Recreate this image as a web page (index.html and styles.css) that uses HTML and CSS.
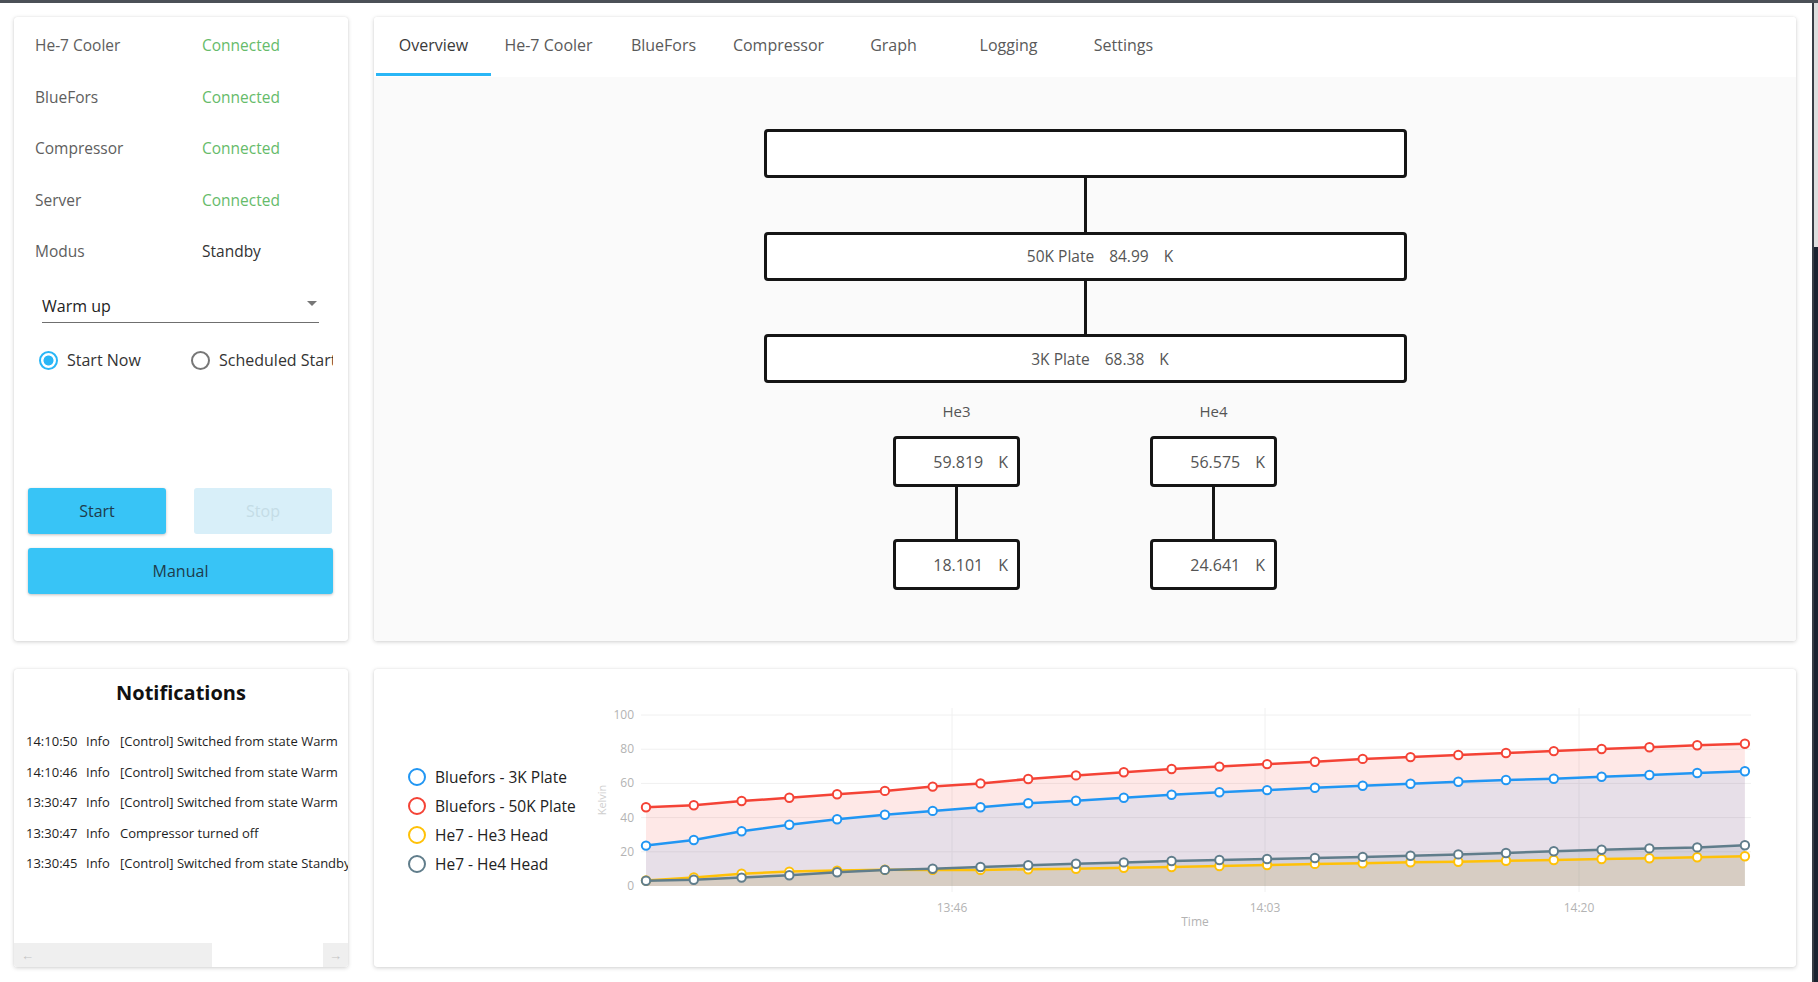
FILE: index.html
```html
<!DOCTYPE html>
<html lang="en">
<head>
<meta charset="utf-8">
<title>Cryostat Control</title>
<link rel="stylesheet" href="styles.css">
</head>
<body>
<div class="window">
  <div class="app">
    <section class="card status-card">
      <div class="status-list">
        <div class="status-row"><span class="label">He-7 Cooler</span><span class="value ok">Connected</span></div>
        <div class="status-row"><span class="label">BlueFors</span><span class="value ok">Connected</span></div>
        <div class="status-row"><span class="label">Compressor</span><span class="value ok">Connected</span></div>
        <div class="status-row"><span class="label">Server</span><span class="value ok">Connected</span></div>
        <div class="status-row"><span class="label">Modus</span><span class="value">Standby</span></div>
      </div>
      <div class="select"><span>Warm up</span><span class="caret"></span></div>
      <div class="radios">
        <div class="radio first"><span class="dot checked"></span><span>Start Now</span></div>
        <div class="radio"><span class="dot"></span><span class="clip">Scheduled Start</span></div>
      </div>
      <div class="actions">
        <button class="btn">Start</button>
        <button class="btn disabled">Stop</button>
        <button class="btn wide">Manual</button>
      </div>
    </section>

    <section class="card main-card">
      <nav class="tabs">
        <span class="tab active">Overview</span>
        <span class="tab">He-7 Cooler</span>
        <span class="tab">BlueFors</span>
        <span class="tab">Compressor</span>
        <span class="tab">Graph</span>
        <span class="tab">Logging</span>
        <span class="tab">Settings</span>
      </nav>
      <div class="overview">
        <div class="node wide first-node"></div>
        <div class="link"></div>
        <div class="node wide"><span class="plate"><span>50K Plate</span><span>84.99</span><span>K</span></span></div>
        <div class="link"></div>
        <div class="node wide"><span class="plate"><span>3K Plate</span><span>68.38</span><span>K</span></span></div>
        <div class="he-row">
          <div class="he-col">
            <div class="he-label">He3</div>
            <div class="node small"><span>59.819</span><span>K</span></div>
            <div class="link short"></div>
            <div class="node small"><span>18.101</span><span>K</span></div>
          </div>
          <div class="he-col">
            <div class="he-label">He4</div>
            <div class="node small"><span>56.575</span><span>K</span></div>
            <div class="link short"></div>
            <div class="node small"><span>24.641</span><span>K</span></div>
          </div>
        </div>
      </div>
    </section>

    <section class="card notif-card">
      <h2 class="notif-title">Notifications</h2>
      <div class="notif-list">
        <div class="notif-row"><span class="time">14:10:50</span><span class="lvl">Info</span><span class="msg">[Control] Switched from state Warm</span></div>
        <div class="notif-row"><span class="time">14:10:46</span><span class="lvl">Info</span><span class="msg">[Control] Switched from state Warm</span></div>
        <div class="notif-row"><span class="time">13:30:47</span><span class="lvl">Info</span><span class="msg">[Control] Switched from state Warm</span></div>
        <div class="notif-row"><span class="time">13:30:47</span><span class="lvl">Info</span><span class="msg">Compressor turned off</span></div>
        <div class="notif-row"><span class="time">13:30:45</span><span class="lvl">Info</span><span class="msg">[Control] Switched from state Standby</span></div>
      </div>
      <div class="hscroll">
        <span class="sb-thumb">&#8592;</span>
        <span class="sb-btn">&#8594;</span>
      </div>
    </section>

    <section class="card chart-card">
      <div class="legend">
        <div class="legend-item"><span class="swatch blue"></span>Bluefors - 3K Plate</div>
        <div class="legend-item"><span class="swatch red"></span>Bluefors - 50K Plate</div>
        <div class="legend-item"><span class="swatch yellow"></span>He7 - He3 Head</div>
        <div class="legend-item"><span class="swatch gray"></span>He7 - He4 Head</div>
      </div>
      <svg class="chart" id="chart" width="1190" height="235" viewBox="0 0 1190 235">
        <g class="grid">
          <line x1="61" y1="15" x2="1171" y2="15"/>
          <line x1="61" y1="49.2" x2="1171" y2="49.2"/>
          <line x1="61" y1="83.4" x2="1171" y2="83.4"/>
          <line x1="61" y1="117.6" x2="1171" y2="117.6"/>
          <line x1="61" y1="151.8" x2="1171" y2="151.8"/>
          <line x1="372" y1="8" x2="372" y2="192"/>
          <line x1="685" y1="8" x2="685" y2="192"/>
          <line x1="999" y1="8" x2="999" y2="192"/>
        </g>
        <g class="axis-text">
          <text x="54" y="19" text-anchor="end">100</text>
          <text x="54" y="53" text-anchor="end">80</text>
          <text x="54" y="87" text-anchor="end">60</text>
          <text x="54" y="122" text-anchor="end">40</text>
          <text x="54" y="156" text-anchor="end">20</text>
          <text x="54" y="190" text-anchor="end">0</text>
          <text x="372" y="212" text-anchor="middle">13:46</text>
          <text x="685" y="212" text-anchor="middle">14:03</text>
          <text x="999" y="212" text-anchor="middle">14:20</text>
          <text x="615" y="226" text-anchor="middle">Time</text>
          <text class="ylabel" x="0" y="0" text-anchor="middle" transform="translate(26 100) rotate(-90)">Kelvin</text>
        </g>
        <g id="series"></g>
      </svg>
    </section>
  </div>
  <div class="edge"></div>
</div>
<script src="script.js"></script>
</body>
</html>
```

FILE: styles.css
```css
* { box-sizing: border-box; }

html, body {
  margin: 0;
  padding: 0;
}

body {
  width: 1818px;
  height: 982px;
  overflow: hidden;
  background: #ffffff;
  font-family: "Open Sans", "Noto Sans", sans-serif;
  color: #333;
}

.window {
  display: flex;
  height: 982px;
  border-top: 3px solid #4b5057;
}

.app {
  flex: 1;
  display: grid;
  grid-template-columns: 334px 1422px;
  grid-template-rows: 624px 298px;
  column-gap: 26px;
  row-gap: 28px;
  padding: 14px 0 0 14px;
}

.edge {
  width: 6px;
  border-left: 2px solid #383d45;
  background: linear-gradient(to bottom, #dedede 0, #dedede 244px, #1b2330 244px, #1b2330 100%);
}

.card {
  background: #fff;
  border-radius: 3px;
  box-shadow: 0 1px 4px rgba(0, 0, 0, 0.18), 0 0 1px rgba(0, 0, 0, 0.12);
}

/* ---------- status card ---------- */
.status-card {
  display: flex;
  flex-direction: column;
  overflow: hidden;
}

.status-list {
  padding: 2.5px 0 0 21px;
}

.status-row {
  display: grid;
  grid-template-columns: 167px 1fr;
  align-items: center;
  height: 51.5px;
  font-size: 15.5px;
}

.status-row .label { color: #5e5e5e; }
.status-row .value { color: #333; }
.status-row .value.ok { color: #66bb6a; }

.select {
  margin: 13px 0 0 28px;
  width: 277px;
  height: 33px;
  border-bottom: 1px solid #6f6f6f;
  display: flex;
  align-items: center;
  justify-content: space-between;
  font-size: 16px;
  color: #222;
}

.caret {
  width: 0;
  height: 0;
  border-left: 5px solid transparent;
  border-right: 5px solid transparent;
  border-top: 5px solid #777;
  margin: -5px 2px 0 0;
}

.radios {
  margin: 22px 15px 0 25px;
  height: 30px;
  display: flex;
  align-items: center;
  white-space: nowrap;
  font-size: 16px;
  color: #333;
}

.radio {
  display: flex;
  align-items: center;
  gap: 9px;
  flex-shrink: 0;
}

.radio.first { width: 152px; }

.radio .clip {
  width: 114px;
  overflow: hidden;
}

.dot {
  width: 19px;
  height: 19px;
  border: 2px solid #777;
  border-radius: 50%;
  flex-shrink: 0;
}

.dot.checked {
  border-color: #29b6f6;
  background: radial-gradient(circle, #29b6f6 0, #29b6f6 4.6px, #fff 5.4px);
}

.actions {
  margin: 113px 15px 0 14px;
  display: grid;
  grid-template-columns: 138px 138px;
  column-gap: 28px;
  row-gap: 14px;
}

.btn {
  height: 46px;
  border: none;
  border-radius: 3px;
  background: #38c4f6;
  color: #1e3c4c;
  font-family: "Open Sans", "Noto Sans", sans-serif;
  font-size: 16px;
  box-shadow: 0 1px 3px rgba(0, 0, 0, 0.25);
  padding: 0;
}

.btn.disabled {
  background: #d8eff9;
  color: #c4dce6;
  box-shadow: none;
}

.btn.wide {
  grid-column: 1 / -1;
  width: 305px;
}

/* ---------- main card ---------- */
.main-card {
  display: flex;
  flex-direction: column;
  overflow: hidden;
}

.tabs {
  height: 60px;
  flex-shrink: 0;
  display: flex;
  padding-left: 2px;
  background: #fff;
}

.tab {
  width: 115px;
  height: 59px;
  line-height: 57px;
  text-align: center;
  font-size: 16px;
  color: #5a5a5a;
  border-bottom: 3px solid transparent;
}

.tab.active {
  color: #3a3a3a;
  border-bottom-color: #29b6f6;
}

.overview {
  flex: 1;
  background: #fafafa;
  display: flex;
  flex-direction: column;
  align-items: center;
}

.node {
  border: 3px solid #151515;
  border-radius: 4px;
  background: #fff;
  display: flex;
  align-items: center;
  justify-content: center;
  color: #555;
  font-size: 15.5px;
}

.node.wide {
  width: 643px;
  height: 49px;
}

.first-node { margin-top: 52px; }

.plate {
  display: flex;
  gap: 15px;
  padding-left: 30px;
}

.link {
  width: 3px;
  height: 53.5px;
  background: #151515;
}

.link.short { height: 52px; }

.he-row {
  display: flex;
  gap: 130px;
  margin-top: 18px;
}

.he-col {
  width: 127px;
  display: flex;
  flex-direction: column;
  align-items: center;
}

.he-label {
  font-size: 15px;
  line-height: 20px;
  color: #555;
  margin-bottom: 15px;
}

.node.small {
  width: 127px;
  height: 51px;
  justify-content: flex-end;
  padding-right: 9px;
  gap: 15px;
  font-size: 16px;
}

/* ---------- notifications ---------- */
.notif-card {
  display: flex;
  flex-direction: column;
  overflow: hidden;
}

.notif-title {
  margin: 10px 0 0;
  text-align: center;
  font-size: 20px;
  line-height: 28px;
  font-weight: 700;
  color: #111;
}

.notif-list {
  margin-top: 19px;
  padding-left: 12px;
}

.notif-row {
  display: flex;
  height: 30.5px;
  line-height: 30.5px;
  font-size: 13px;
  color: #1e1e1e;
  white-space: nowrap;
}

.notif-row .time { width: 60px; flex-shrink: 0; }
.notif-row .lvl { width: 34px; flex-shrink: 0; }
.notif-row .msg { max-width: 228px; overflow: hidden; }

.hscroll {
  margin-top: auto;
  height: 24px;
  display: flex;
  background: #fff;
  font-size: 13px;
  color: #c4c4c4;
}

.sb-thumb {
  width: 198px;
  background: #efefef;
  padding-left: 7px;
  line-height: 24px;
}

.sb-btn {
  width: 25px;
  margin-left: auto;
  background: #efefef;
  text-align: center;
  line-height: 24px;
}

/* ---------- chart ---------- */
.chart-card {
  display: flex;
  align-items: flex-start;
}

.legend {
  width: 206px;
  padding: 0 0 0 34px;
  align-self: center;
  margin-top: 4px;
  display: flex;
  flex-direction: column;
}

.legend-item {
  display: flex;
  align-items: center;
  gap: 9px;
  height: 29px;
  font-size: 15.5px;
  color: #222;
  white-space: nowrap;
}

.swatch {
  width: 18px;
  height: 18px;
  border: 2.5px solid;
  border-radius: 50%;
  flex-shrink: 0;
}

.swatch.blue { border-color: #2196f3; }
.swatch.red { border-color: #f44336; }
.swatch.yellow { border-color: #ffc107; }
.swatch.gray { border-color: #607d8b; }

.chart {
  margin-top: 31px;
  display: block;
}

.grid line {
  stroke: #f0f0f0;
  stroke-width: 1;
}

.axis-text text {
  font-family: "Open Sans", "Noto Sans", sans-serif;
  font-size: 12px;
  fill: #b3b3b3;
}

.axis-text .ylabel {
  font-size: 11px;
  fill: #cfcfcf;
}
```

FILE: script.js
```js
(function () {
  var NS = 'http://www.w3.org/2000/svg';
  var series = [
    { c: '#f44336', f: 'rgba(244,67,54,0.12)',
      d: [46.0, 47.2, 49.7, 51.6, 53.6, 55.6, 58.1, 60.0, 62.6, 64.7, 66.5, 68.4, 69.8, 71.3, 72.7, 74.3, 75.4, 76.6, 77.8, 78.9, 80.1, 81.1, 82.3, 83.2] },
    { c: '#2196f3', f: 'rgba(33,150,243,0.10)',
      d: [23.6, 26.9, 32.0, 35.8, 39.0, 41.7, 43.9, 46.0, 48.4, 49.9, 51.6, 53.4, 54.8, 56.1, 57.5, 58.6, 59.8, 61.0, 62.0, 62.7, 63.9, 64.9, 66.1, 67.1] },
    { c: '#ffc107', f: 'rgba(255,193,7,0.12)',
      d: [3.2, 5.0, 7.2, 8.4, 9.0, 9.5, 9.4, 9.4, 9.8, 10.1, 10.7, 11.1, 11.7, 12.3, 12.9, 13.3, 13.9, 14.2, 14.8, 15.2, 15.8, 16.2, 16.8, 17.4] },
    { c: '#607d8b', f: 'rgba(96,125,139,0.14)',
      d: [3.1, 3.7, 4.9, 6.3, 8.0, 9.4, 10.1, 11.1, 12.1, 13.0, 13.8, 14.6, 15.2, 15.8, 16.4, 17.0, 17.7, 18.5, 19.3, 20.3, 21.2, 22.0, 22.6, 23.8] }
  ];
  function X(k) { return 66 + k * 47.78; }
  function Y(v) { return 186 - 1.71 * v; }
  var g = document.getElementById('series');
  function el(name, attrs) {
    var e = document.createElementNS(NS, name);
    for (var a in attrs) e.setAttribute(a, attrs[a]);
    g.appendChild(e);
    return e;
  }
  series.forEach(function (s) {
    var d = 'M' + X(0) + ' 186';
    s.d.forEach(function (v, k) { d += ' L' + X(k).toFixed(1) + ' ' + Y(v).toFixed(1); });
    d += ' L' + X(s.d.length - 1).toFixed(1) + ' 186 Z';
    el('path', { d: d, fill: s.f, stroke: 'none' });
  });
  series.forEach(function (s) {
    var pts = s.d.map(function (v, k) { return X(k).toFixed(1) + ',' + Y(v).toFixed(1); }).join(' ');
    el('polyline', { points: pts, fill: 'none', stroke: s.c, 'stroke-width': 2.5 });
    s.d.forEach(function (v, k) {
      el('circle', { cx: X(k).toFixed(1), cy: Y(v).toFixed(1), r: 4.2, fill: '#fff', stroke: s.c, 'stroke-width': 2 });
    });
  });
})();
```
